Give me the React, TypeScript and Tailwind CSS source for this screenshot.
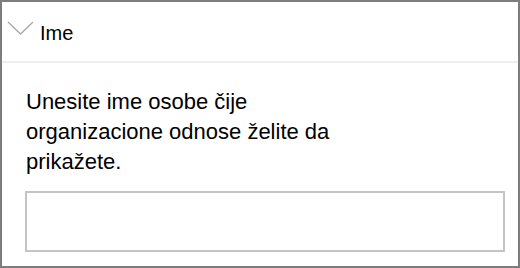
export default function App() {
  return (
    <div
      className="w-[520px] h-[268px] border-2 border-[#7d7d7d] bg-white flex flex-col text-black"
      style={{ fontFamily: '"Liberation Sans", Arial, sans-serif' }}
    >
      {/* Header */}
      <div className="h-[61px] shrink-0 border-b-2 border-[#eeeeee] flex items-start">
        <svg
          className="ml-[5px] mt-[19px]"
          width="27"
          height="14"
          viewBox="0 0 27 14"
          fill="none"
        >
          <polyline
            points="1,1 13.5,13 26,1"
            stroke="#a8a8a8"
            strokeWidth="1.3"
          />
        </svg>
        <span className="ml-[6px] mt-[20px] text-[20px] leading-[23px]">Ime</span>
      </div>

      {/* Body */}
      <div className="pl-[23px] pt-[24px]">
        <p className="w-[340px] text-[22px] leading-[30px] pl-[1px]">
          Unesite ime osobe čije organizacione odnose želite da prikažete.
        </p>
        <input
          type="text"
          className="mt-[14px] block w-[480px] h-[61px] border-2 border-[#c4c4c4] bg-white outline-none"
        />
      </div>
    </div>
  );
}
